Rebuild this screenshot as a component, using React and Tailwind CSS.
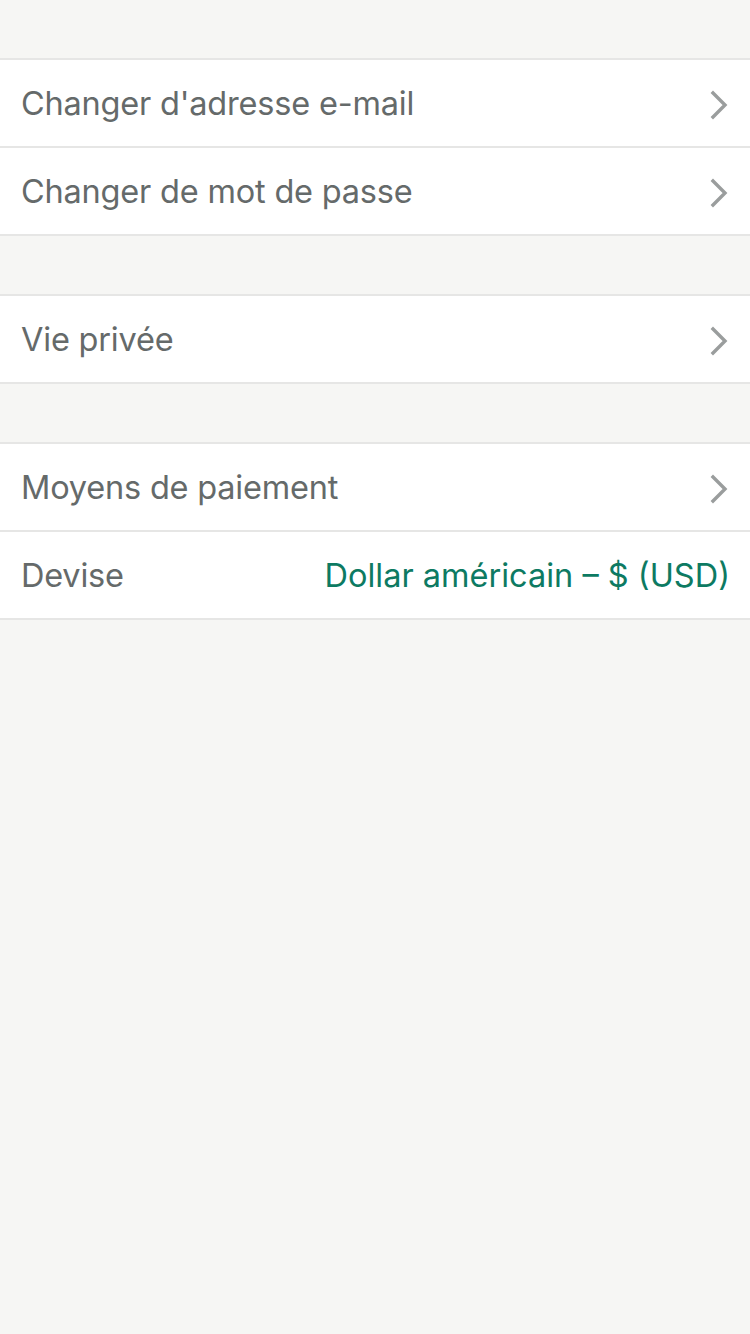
const font = { fontFamily: 'Inter, "Noto Sans", sans-serif' }

function Chevron() {
  return (
    <svg width="18" height="30" viewBox="0 0 18 30" className="shrink-0">
      <path d="M3 3 L15 15 L3 27" fill="none" stroke="#9a9d9d" strokeWidth="3.4" strokeLinecap="square" />
    </svg>
  )
}

function Row({ label, value, arrow = true }) {
  return (
    <div className="h-[88px] flex items-center justify-between pl-[21px] pr-[22px] pt-[3px] bg-white border-b-2 border-[#e6e6e5]">
      <span className="text-[32.5px] text-[#656a6a] tracking-[-0.2px]">{label}</span>
      {value && <span className="text-[32.5px] text-[#0d7a62] tracking-[0px] mr-[-2px]">{value}</span>}
      {arrow && <Chevron />}
    </div>
  )
}

function Group({ children }) {
  return <div className="border-t-2 border-[#e6e6e5] flex flex-col">{children}</div>
}

export default function App() {
  return (
    <div className="min-h-[1334px] w-[750px] bg-[#f6f6f4] flex flex-col gap-[58px] pt-[58px]" style={font}>
      <Group>
        <Row label="Changer d'adresse e-mail" />
        <Row label="Changer de mot de passe" />
      </Group>
      <Group>
        <Row label="Vie privée" />
      </Group>
      <Group>
        <Row label="Moyens de paiement" />
        <Row label="Devise" value="Dollar américain – $ (USD)" arrow={false} />
      </Group>
    </div>
  )
}
